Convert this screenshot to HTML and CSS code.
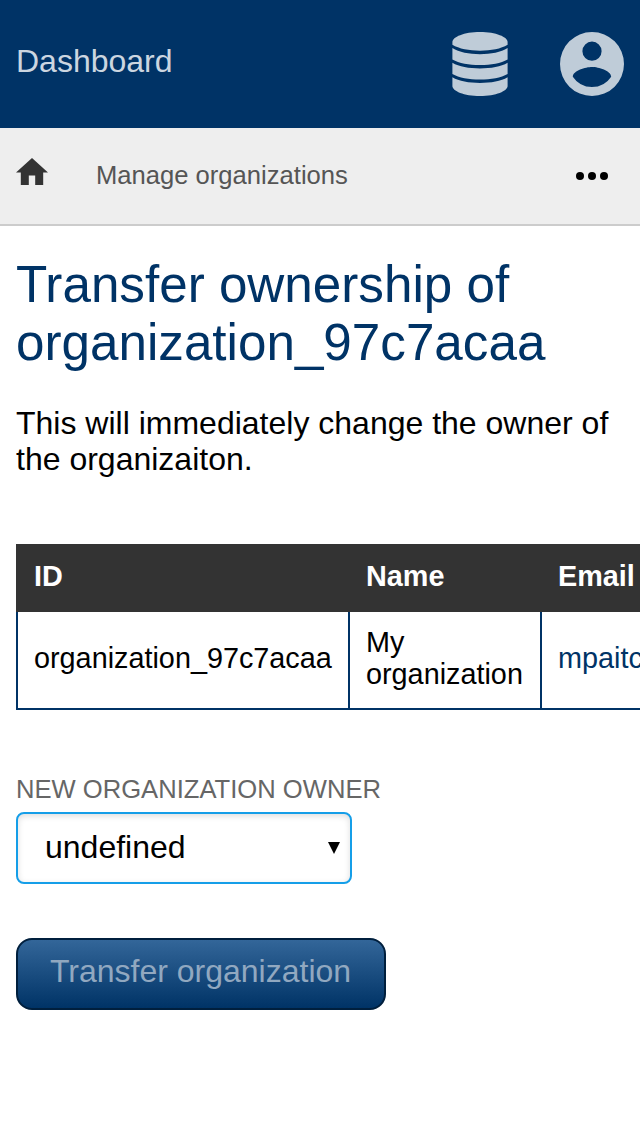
FILE: index.html
```html
<!DOCTYPE html>
<html lang="en">
<head>
<meta charset="utf-8">
<title>Dashboard</title>
<link rel="stylesheet" href="styles.css">
</head>
<body>
<header class="topbar">
  <a class="brand">Dashboard</a>
  <svg class="db" viewBox="0 0 56 64" width="56" height="64"><path d="M.4 10C.4 5 12 0 28 0s27.600 5 27.600 10v2.800C49 16.800 39 18.700 28 18.700S7 16.800.4 12.800z"/><path d="M.4 16C7 20.300 17 22.200 28 22.200S49 20.300 55.600 16v11.500C49 31.300 39 33 28 33S7 31.300.4 27.500z"/><path d="M.4 30.800C7 34.800 17 36.500 28 36.500s21-1.700 27.600-5.700V42C49 45.800 39 47.500 28 47.500S7 45.800.4 42z"/><path d="M.4 45.300C7 49.300 17 51 28 51s21-1.700 27.600-5.700v8.700C55.600 59 44 64 28 64S.4 59 .4 54z"/></svg>
  <svg class="user" viewBox="2 2 20 20" width="64" height="64"><path d="M12 2a10 10 0 1 0 0 20 10 10 0 0 0 0-20zm0 3a3 3 0 1 1 0 6 3 3 0 0 1 0-6zm0 14.200a7.200 7.200 0 0 1-6-3.220c.03-1.990 4-3.080 6-3.080s5.970 1.090 6 3.080a7.200 7.200 0 0 1-6 3.220z"/></svg>
</header>
<nav class="crumbs">
  <svg class="home" viewBox="2 3 20 17" width="32" height="27.2"><path d="M10 20v-6h4v6h5v-8h3L12 3 2 12h3v8z"/></svg>
  <a class="crumb">Manage organizations</a>
  <svg class="more" viewBox="0 0 32 8" width="32" height="8"><circle cx="4" cy="4" r="4"/><circle cx="16" cy="4" r="4"/><circle cx="28" cy="4" r="4"/></svg>
</nav>
<main class="content">
  <h1 class="title">Transfer ownership of organization_97c7acaa</h1>
  <p class="intro">This will immediately change the owner of the organizaiton.</p>
  <div class="scroller">
    <table class="orgs">
      <thead><tr><th class="id">ID</th><th class="name">Name</th><th class="email">Email</th></tr></thead>
      <tbody><tr><td>organization_97c7acaa</td><td>My organization</td><td class="link">mpaitc</td></tr></tbody>
    </table>
  </div>
  <div class="label">NEW ORGANIZATION OWNER</div>
  <div class="select"><span>undefined</span><svg class="arrow" viewBox="0 0 12 12" width="12" height="12"><path d="M0 0h12L6 12z"/></svg></div>
  <button class="submit" disabled>Transfer organization</button>
</main>
</body>
</html>
```
FILE: styles.css
```css
* { box-sizing: border-box; }
body { margin: 0; height: 1136px; overflow: hidden; background: #fff; color: #000; font-family: "Liberation Sans", Arial, sans-serif; }
.topbar { display: flex; align-items: center; height: 128px; padding: 0 16px; background: #036; color: #ccd6e0; fill: #bfccd8; }
.brand { margin: 0 auto 6px 0; font-size: 32px; line-height: 36px; }
.db { margin-right: 52px; }
.crumbs { display: flex; align-items: center; height: 98px; padding: 0 32px 0 16px; background: #eee; border-bottom: 2px solid #ccc; }
.home { margin: -9px 48px 0 0; fill: #333; }
.crumb { margin-right: auto; color: #555; font-size: 25.6px; line-height: 30px; margin-top: -2px; }
.content { padding: 30px 0 0 16px; }
.title { margin: 0; color: #036; font-size: 51.2px; font-weight: 400; line-height: 58px; }
.intro { margin: 33px 0 67px; padding-right: 16px; font-size: 32px; line-height: 36px; }
.scroller { overflow: hidden; }
.orgs { width: 792px; table-layout: fixed; border-collapse: separate; border-spacing: 0; font-size: 28.8px; line-height: 32px; }
.orgs th { height: 68px; padding: 0 16px 4px 18px; background: #333; color: #fff; text-align: left; }
.orgs td { height: 98px; padding: 0 16px 4px; border: solid #036; border-width: 0 0 2px 2px; }
.id { width: 332px; }
.name { width: 192px; }
.orgs .link { color: #036; }
.label { margin-top: 64px; color: #666; font-size: 25.6px; line-height: 30px; }
.select { display: flex; align-items: center; justify-content: space-between; width: 336px; height: 72px; margin-top: 8px; padding: 0 10px 2px 27px; border: 2px solid #159ee8; border-radius: 8px; box-shadow: inset 0 2px 6px #ddd; font-size: 32px; }
.arrow { margin-top: 2px; }
.submit { display: block; width: 370px; height: 72px; margin-top: 54px; padding: 0 1px 5px 0; border: 2px solid #001f3d; border-radius: 16px; background: linear-gradient(#336699, #003366); color: #91a8c0; font: 32px "Liberation Sans", Arial, sans-serif; }
```
